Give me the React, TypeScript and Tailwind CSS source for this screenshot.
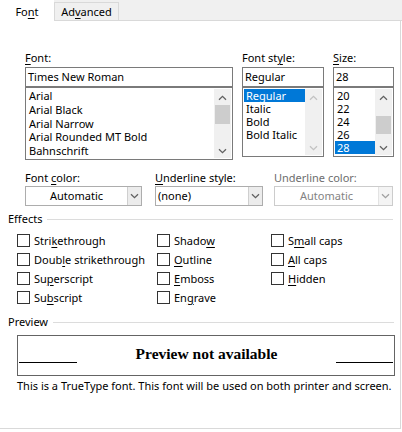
import React from "react";

const Acc = ({ t, i }: { t: string; i?: number }) => {
  if (i === undefined) return <>{t}</>;
  return (
    <>
      {t.slice(0, i)}
      <span className="underline underline-offset-[2px] decoration-1">{t[i]}</span>
      {t.slice(i + 1)}
    </>
  );
};

const Chevron = ({ up, color }: { up?: boolean; color: string }) => (
  <svg width="9" height="6" viewBox="0 0 9 6" className={up ? "rotate-180" : ""}>
    <path d="M1 1.2 L4.5 4.6 L8 1.2" fill="none" stroke={color} strokeWidth="1.3" />
  </svg>
);

const ScrollBar = ({
  thumbTop,
  thumbH,
  disabled,
}: {
  thumbTop?: number;
  thumbH?: number;
  disabled?: boolean;
}) => {
  const arrow = disabled ? "#c2c2c2" : "#606060";
  return (
    <div className="w-[17px] h-full bg-[#f0f0f0] flex flex-col relative shrink-0">
      <div className="h-[15px] flex items-center justify-center pt-[2px]">
        <Chevron up color={arrow} />
      </div>
      <div className="flex-1" />
      <div className="h-[15px] flex items-center justify-center">
        <Chevron color={arrow} />
      </div>
      {thumbTop !== undefined && (
        <div
          className="absolute left-px right-px bg-[#cdcdcd]"
          style={{ top: thumbTop, height: thumbH }}
        />
      )}
    </div>
  );
};

const TextBox = ({ value }: { value: string }) => (
  <div className="h-[20px] border border-[#7a7a7a] bg-white px-[2px] leading-[18px] whitespace-nowrap overflow-hidden">
    {value}
  </div>
);

const ListBox = ({
  items,
  selected,
  h,
  rowH,
  thumbTop,
  thumbH,
  disabledBar,
}: {
  items: string[];
  selected?: string;
  h: number;
  rowH: string;
  thumbTop?: number;
  thumbH?: number;
  disabledBar?: boolean;
}) => (
  <div
    className="border border-[#7a7a7a] bg-white p-px flex"
    style={{ height: h }}
  >
    <div className="flex-1 flex flex-col overflow-hidden">
      {items.map((it) => (
        <div
          key={it}
          className={`${rowH} pl-[2px] whitespace-nowrap overflow-hidden ${
            it === selected ? "bg-[#0078d7] text-white" : ""
          }`}
        >
          {it}
        </div>
      ))}
    </div>
    <ScrollBar thumbTop={thumbTop} thumbH={thumbH} disabled={disabledBar} />
  </div>
);

const Combo = ({
  value,
  w,
  center,
  disabled,
}: {
  value: string;
  w: string;
  center?: boolean;
  disabled?: boolean;
}) => (
  <div
    className={`${w} h-[20px] flex border ${
      disabled ? "border-[#cccccc] text-[#838383]" : "border-[#adadad]"
    } bg-white`}
  >
    <div
      className={`flex-1 leading-[18px] px-[2px] ${center ? "text-center" : ""}`}
    >
      {value}
    </div>
    <div
      className={`w-[14px] border-l ${
        disabled ? "border-[#e3e3e3] bg-[#f4f4f4]" : "border-[#cfcfcf] bg-[#ececec]"
      } flex items-center justify-center`}
    >
      <Chevron color={disabled ? "#a0a0a0" : "#606060"} />
    </div>
  </div>
);

const Check = ({ t, i }: { t: string; i: number }) => (
  <div className="h-[19px] flex items-center gap-[4px]">
    <div className="w-[13px] h-[13px] border border-[#333333] bg-white shrink-0" />
    <span className="whitespace-nowrap">
      <Acc t={t} i={i} />
    </span>
  </div>
);

export default function App() {
  return (
    <div className="w-[402px] h-[432px] bg-white text-[11px] text-black font-['Noto_Sans','Segoe_UI',sans-serif] leading-[16px]">
      {/* tabs */}
      <div className="flex items-end h-[21px] bg-[#f0f0f0]">
        <div className="w-[54px] h-[21px] bg-white flex items-center justify-center pt-[3px]">
          <Acc t="Font" i={2} />
        </div>
        <div className="w-[65px] h-[19px] border border-[#d9d9d9] bg-[#f0f0f0] flex items-center justify-center pt-[1px]">
          <Acc t="Advanced" i={2} />
        </div>
        <div className="flex-1 h-full border-b border-[#d9d9d9]" />
      </div>

      {/* panel */}
      <div className="w-[401px] h-[408px] border-r border-b border-[#d9d9d9] pt-[29px]">
        <div className="flex items-start ml-[25px]">
          <div className="w-[208px]">
            <div className="h-[16px] mb-[1px]">
              <Acc t="Font:" i={0} />
            </div>
            <TextBox value="Times New Roman" />
            <ListBox
              items={["Arial", "Arial Black", "Arial Narrow", "Arial Rounded MT Bold", "Bahnschrift"]}
              h={73}
              rowH="h-[14px] leading-[14px]"
              thumbTop={16}
              thumbH={19}
            />
          </div>
          <div className="w-[82px] ml-[9px]">
            <div className="h-[16px] mb-[1px]">
              <Acc t="Font style:" i={7} />
            </div>
            <TextBox value="Regular" />
            <ListBox
              items={["Regular", "Italic", "Bold", "Bold Italic"]}
              selected="Regular"
              h={70}
              rowH="h-[13px] leading-[13px]"
              disabledBar
            />
          </div>
          <div className="w-[61px] ml-[9px]">
            <div className="h-[16px] mb-[1px]">
              <Acc t="Size:" i={0} />
            </div>
            <TextBox value="28" />
            <ListBox
              items={["20", "22", "24", "26", "28"]}
              selected="28"
              h={70}
              rowH="h-[13px] leading-[13px]"
              thumbTop={27}
              thumbH={18}
            />
          </div>
        </div>

        {/* colour / underline */}
        <div className="flex items-start ml-[25px] mt-[10px]">
          <div className="w-[117px]">
            <div className="h-[16px]">
              <Acc t="Font color:" i={5} />
            </div>
            <Combo value="Automatic" w="w-[117px]" center />
          </div>
          <div className="w-[108px] ml-[13px]">
            <div className="h-[16px]">
              <Acc t="Underline style:" i={0} />
            </div>
            <Combo value="(none)" w="w-[108px]" />
          </div>
          <div className="w-[119px] ml-[11px]">
            <div className="h-[16px] text-[#6d6d6d]">Underline color:</div>
            <Combo value="Automatic" w="w-[119px]" center disabled />
          </div>
        </div>

        {/* effects */}
        <div className="flex items-center ml-[8px] mr-[7px] mt-[5px] h-[16px]">
          <span>Effects</span>
          <div className="flex-1 h-px bg-[#dcdcdc] ml-[5px]" />
        </div>
        <div className="grid grid-cols-[140px_114px_1fr] ml-[17px] mt-[4px]">
          <div className="flex flex-col">
            <Check t="Strikethrough" i={4} />
            <Check t="Double strikethrough" i={4} />
            <Check t="Superscript" i={2} />
            <Check t="Subscript" i={2} />
          </div>
          <div className="flex flex-col">
            <Check t="Shadow" i={5} />
            <Check t="Outline" i={0} />
            <Check t="Emboss" i={0} />
            <Check t="Engrave" i={2} />
          </div>
          <div className="flex flex-col">
            <Check t="Small caps" i={1} />
            <Check t="All caps" i={0} />
            <Check t="Hidden" i={0} />
          </div>
        </div>

        {/* preview */}
        <div className="flex items-center ml-[8px] mr-[6px] mt-[7px] h-[16px]">
          <span>Preview</span>
          <div className="flex-1 h-px bg-[#dcdcdc] ml-[5px]" />
        </div>
        <div className="ml-[17px] mt-[5px] w-[378px] h-[41px] border border-[#646464] flex items-end justify-between px-px pb-[12px]">
          <div className="w-[58px] h-px bg-black" />
          <div className="font-['Liberation_Serif','Times_New_Roman',serif] font-bold text-[15.5px] leading-[16px] mb-[1px]">
            Preview not available
          </div>
          <div className="w-[57px] h-px bg-black" />
        </div>
        <div className="ml-[17px] mt-[2px] whitespace-nowrap">
          This is a TrueType font. This font will be used on both printer and screen.
        </div>
      </div>
    </div>
  );
}
